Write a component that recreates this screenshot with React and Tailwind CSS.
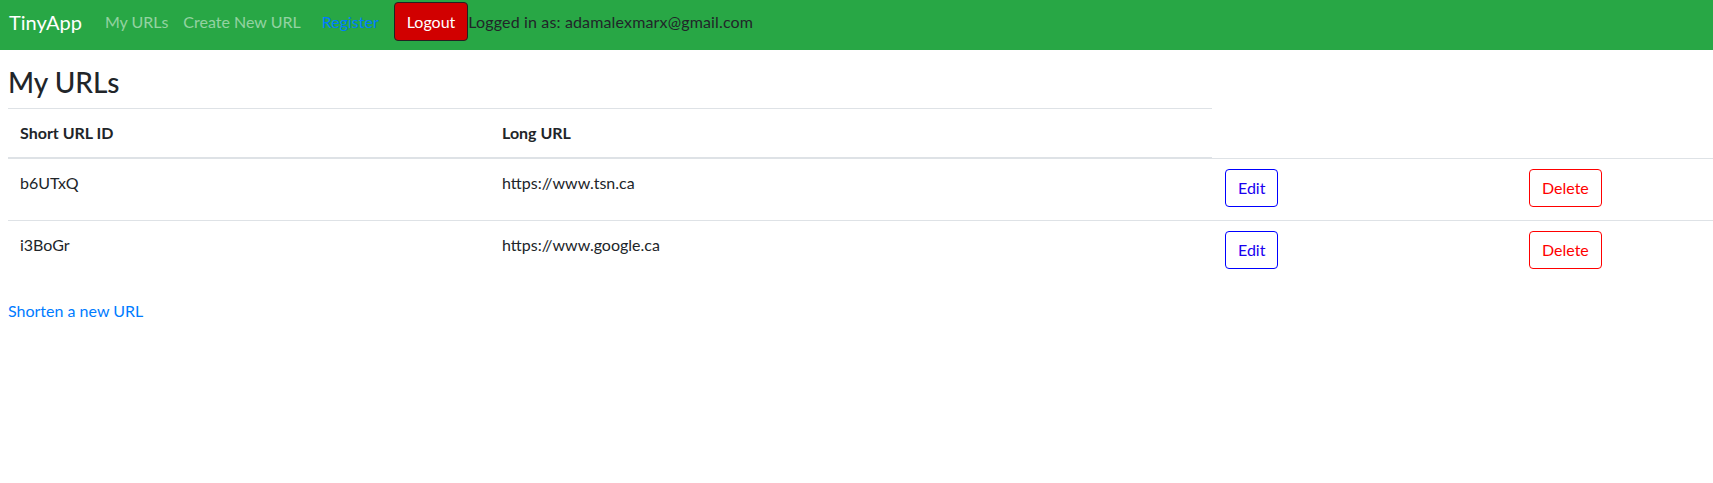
export default function App() {
  const urls = [
    { id: "b6UTxQ", longURL: "https://www.tsn.ca" },
    { id: "i3BoGr", longURL: "https://www.google.ca" },
  ];

  return (
    <div className="min-h-screen bg-white text-[#212529] font-['Lato','Noto_Sans',sans-serif] text-[16px] leading-[24px]">
      {/* Navbar */}
      <nav className="h-[50px] bg-[#28a745] flex items-center pl-[9px] pb-[7px]">
        <a href="#" className="text-white text-[20px] leading-[30px] mr-[15px]">
          TinyApp
        </a>
        <a href="#" className="text-white/50 px-[8px]">My URLs</a>
        <a href="#" className="text-white/50 px-[7px]">Create New URL</a>
        <a href="#" className="text-[#007bff] ml-[14px]">Register</a>
        <button className="ml-[15px] h-[39px] px-[12px] bg-[#d10000] text-white border border-[#222] rounded-[4px]">
          Logout
        </button>
        <span className="tracking-[0.15px]">Logged in as: adamalexmarx@gmail.com</span>
      </nav>

      <main className="pl-[8px]">
        <h2 className="text-[28px] leading-[34px] font-medium mt-[15px] mb-[9px]">
          My URLs
        </h2>

        <table className="border-collapse text-left">
          <thead>
            <tr>
              <th className="w-[482px] p-[12px] font-bold border-t border-b-2 border-[#dee2e6]">
                Short URL ID
              </th>
              <th className="w-[722px] p-[12px] font-bold border-t border-b-2 border-[#dee2e6]">
                Long URL
              </th>
            </tr>
          </thead>
          <tbody>
            {urls.map((url) => (
              <tr key={url.id}>
                <td className="p-[12px] align-top border-t border-[#dee2e6]">{url.id}</td>
                <td className="p-[12px] align-top border-t border-[#dee2e6]">{url.longURL}</td>
                <td className="w-[305px] pl-[13px] pt-[10px] pb-[13px] align-top border-t border-[#dee2e6]">
                  <button className="h-[38px] px-[12px] border border-[#0000ff] text-[#1a00f0] rounded-[4px]">
                    Edit
                  </button>
                </td>
                <td className="w-[196px] pl-[12px] pt-[10px] pb-[13px] align-top border-t border-[#dee2e6]">
                  <button className="h-[38px] px-[12px] border border-[#ff0000] text-[#ff0000] rounded-[4px]">
                    Delete
                  </button>
                </td>
              </tr>
            ))}
          </tbody>
        </table>

        <a href="#" className="block mt-[17px] text-[#007bff]">
          Shorten a new URL
        </a>
      </main>
    </div>
  );
}
